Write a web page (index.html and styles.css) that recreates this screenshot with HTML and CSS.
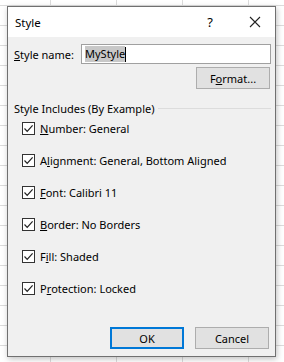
FILE: index.html
```html
<!DOCTYPE html>
<html lang="en">
<head>
<meta charset="UTF-8">
<title>Style</title>
<link rel="stylesheet" href="styles.css">
</head>
<body>
<div class="dialog">
  <div class="titlebar">
    <span class="title">Style</span>
    <span class="help">?</span>
    <svg class="close" width="12" height="12" viewBox="0 0 12 12"><path d="M1 1L11 11M11 1L1 11" stroke="#222" stroke-width="1.1" fill="none"/></svg>
  </div>
  <div class="content">
    <div class="name-row">
      <label class="name-label"><u>S</u>tyle name:</label>
      <div class="name-input"><span class="sel">MyStyle</span><span class="caret"></span></div>
    </div>
    <div class="format-row">
      <button class="btn">F<u>o</u>rmat...</button>
    </div>
    <div class="group">
      <span class="group-label">Style Includes (By Example)</span>
      <span class="group-line"></span>
    </div>
    <ul class="checks">
      <li><span class="box"><svg width="11" height="11" viewBox="0 0 11 11"><path d="M1.5 5.5L4.2 8.3L9.6 2.3" stroke="#222" stroke-width="1.2" fill="none"/></svg></span><u>N</u>umber: General</li>
      <li><span class="box"><svg width="11" height="11" viewBox="0 0 11 11"><path d="M1.5 5.5L4.2 8.3L9.6 2.3" stroke="#222" stroke-width="1.2" fill="none"/></svg></span>A<u>l</u>ignment: General, Bottom Aligned</li>
      <li><span class="box"><svg width="11" height="11" viewBox="0 0 11 11"><path d="M1.5 5.5L4.2 8.3L9.6 2.3" stroke="#222" stroke-width="1.2" fill="none"/></svg></span><u>F</u>ont: Calibri 11</li>
      <li><span class="box"><svg width="11" height="11" viewBox="0 0 11 11"><path d="M1.5 5.5L4.2 8.3L9.6 2.3" stroke="#222" stroke-width="1.2" fill="none"/></svg></span><u>B</u>order: No Borders</li>
      <li><span class="box"><svg width="11" height="11" viewBox="0 0 11 11"><path d="M1.5 5.5L4.2 8.3L9.6 2.3" stroke="#222" stroke-width="1.2" fill="none"/></svg></span>F<u>i</u>ll: Shaded</li>
      <li><span class="box"><svg width="11" height="11" viewBox="0 0 11 11"><path d="M1.5 5.5L4.2 8.3L9.6 2.3" stroke="#222" stroke-width="1.2" fill="none"/></svg></span>P<u>r</u>otection: Locked</li>
    </ul>
    <div class="actions">
      <button class="btn btn-default">OK</button>
      <button class="btn">Cancel</button>
    </div>
  </div>
</div>
</body>
</html>
```
FILE: styles.css
```css
html, body {
  margin: 0;
  height: 100%;
  overflow: hidden;
}
body {
  font-family: 'Noto Sans', 'Open Sans', sans-serif;
  font-size: 11px;
  color: #000;
  background-color: #fff;
  background-image:
    linear-gradient(to right, #dcdcdc 1px, transparent 1px),
    linear-gradient(to bottom, #dcdcdc 1px, transparent 1px);
  background-size: 66px 20px;
  background-position: 50px 5px;
}
.dialog {
  margin: 6px 0 0 7px;
  width: 269px;
  height: 351px;
  box-sizing: border-box;
  border: 1px solid #707070;
  background: #f0f0f0;
  box-shadow: 1px 2px 6px rgba(0, 0, 0, 0.25);
  display: flex;
  flex-direction: column;
}
.titlebar {
  height: 30px;
  background: #fff;
  display: flex;
  align-items: center;
  padding: 0 0 0 7px;
}
.title {
  flex: 1;
  font-size: 11.5px;
}
.help {
  font-size: 13px;
  margin-right: 36px;
}
.close {
  margin-right: 14px;
}
.content {
  flex: 1;
  padding: 7px 4px 0 5px;
  display: flex;
  flex-direction: column;
}
.name-row {
  display: flex;
  align-items: center;
  height: 20px;
}
.name-label {
  width: 67px;
  padding-left: 1px;
}
.name-input {
  flex: 1;
  height: 20px;
  box-sizing: border-box;
  border: 1px solid #a0a0a0;
  background: #fff;
  display: flex;
  align-items: center;
  padding-left: 3px;
}
.sel {
  background: #c8c8c8;
  line-height: 16px;
}
.caret {
  width: 1px;
  height: 15px;
  background: #000;
}
.format-row {
  display: flex;
  justify-content: flex-end;
  margin-top: 3px;
  padding-right: 1px;
}
.btn {
  font-family: inherit;
  font-size: 11px;
  width: 74px;
  height: 22px;
  box-sizing: border-box;
  background: #e1e1e1;
  border: 1px solid #adadad;
  color: #000;
  padding: 0;
}
.btn-default {
  border: 2px solid #0078d7;
}
.group {
  display: flex;
  align-items: center;
  margin-top: 12px;
  height: 14px;
}
.group-label {
  padding-left: 1px;
  margin-right: 4px;
}
.group-line {
  flex: 1;
  height: 1px;
  background: #dcdcdc;
}
.checks {
  list-style: none;
  margin: -3px 0 0 0;
  padding: 0 0 0 9px;
}
.checks li {
  display: flex;
  align-items: center;
  height: 32px;
}
.box {
  width: 13px;
  height: 13px;
  box-sizing: border-box;
  border: 1px solid #333;
  background: #fff;
  display: flex;
  align-items: center;
  justify-content: center;
  margin-right: 5px;
}
.actions {
  display: flex;
  justify-content: flex-end;
  gap: 11px;
  margin-top: 23px;
  padding-right: 2px;
}
```
